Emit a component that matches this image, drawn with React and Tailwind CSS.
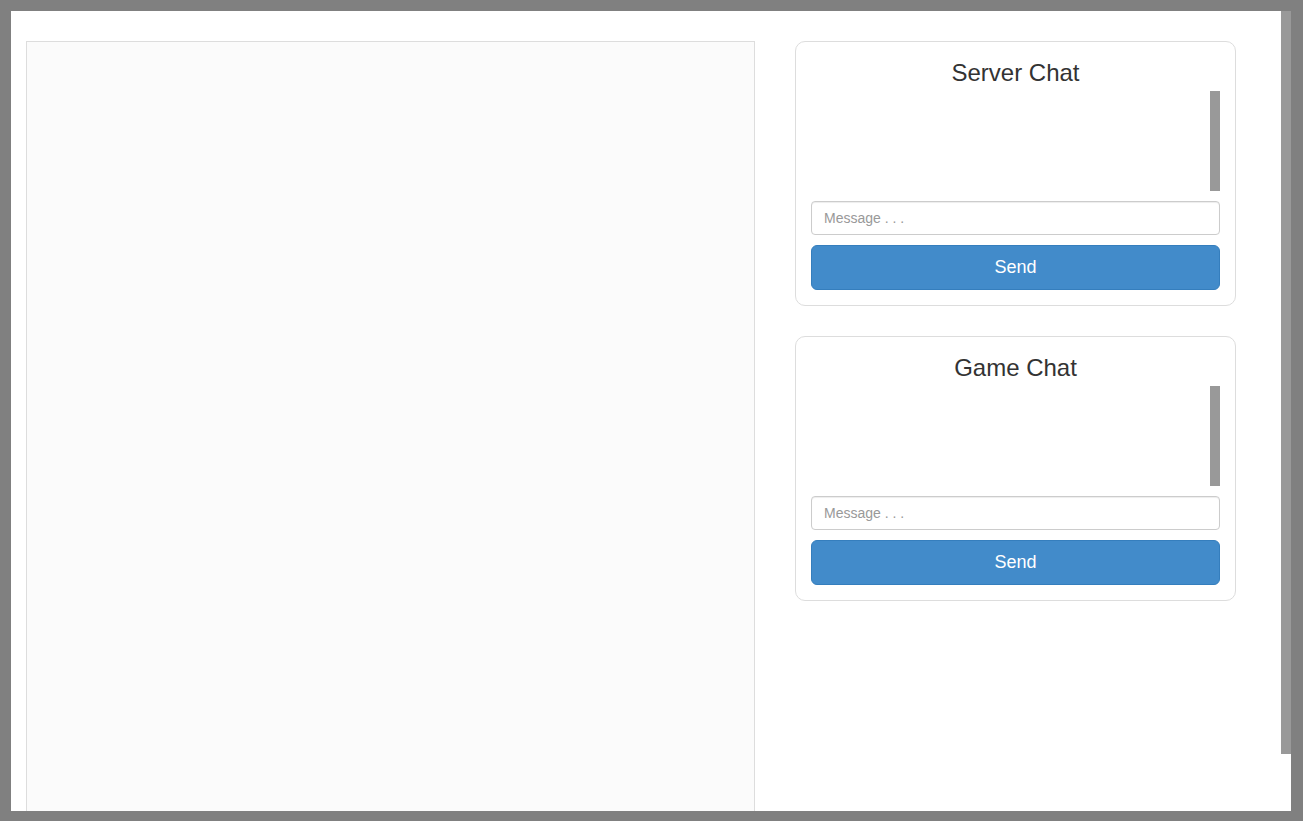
const ChatBox = ({ title }) => (
    <div className="rounded-[10px] border border-[#dddddd] bg-white px-[15px] pt-[18px] pb-[15px]">
        <h3 className="mb-[5px] text-center text-[24px] leading-[26px] text-[#333333]">{title}</h3>
        {/* message list with its scroll thumb */}
        <div className="flex h-[100px] justify-end">
            <div className="h-full w-[10px] bg-[#999999]" />
        </div>
        <input
            type="text"
            placeholder="Message . . ."
            className="mt-[10px] block h-[34px] w-full rounded-[4px] border border-[#cccccc] px-3 text-[14px] text-[#555555] shadow-[inset_0_1px_1px_rgba(0,0,0,0.075)] outline-none placeholder:text-[#999999]"
        />
        <button className="mt-[10px] block h-[45px] w-full rounded-[6px] border border-[#357ebd] bg-[#428bca] text-[18px] text-white">
            Send
        </button>
    </div>
);

export default function App() {
    return (
        <div
            className="flex h-[821px] w-[1303px] bg-[#808080] pt-[11px] pr-[12px] pb-[10px] pl-[11px]"
            style={{ fontFamily: '"Liberation Sans", Arial, sans-serif' }}
        >
            {/* page */}
            <div className="flex flex-1 gap-[40px] overflow-hidden bg-white pt-[30px] pr-[45px] pl-[15px]">
                <div className="h-[800px] w-[729px] shrink-0 border border-[#dddddd] bg-[#fbfbfb]" />
                <div className="flex flex-1 flex-col gap-[30px]">
                    <ChatBox title="Server Chat" />
                    <ChatBox title="Game Chat" />
                </div>
            </div>
            {/* window scrollbar */}
            <div className="w-[10px] bg-white">
                <div className="h-[743px] bg-[#999999]" />
            </div>
        </div>
    );
}
